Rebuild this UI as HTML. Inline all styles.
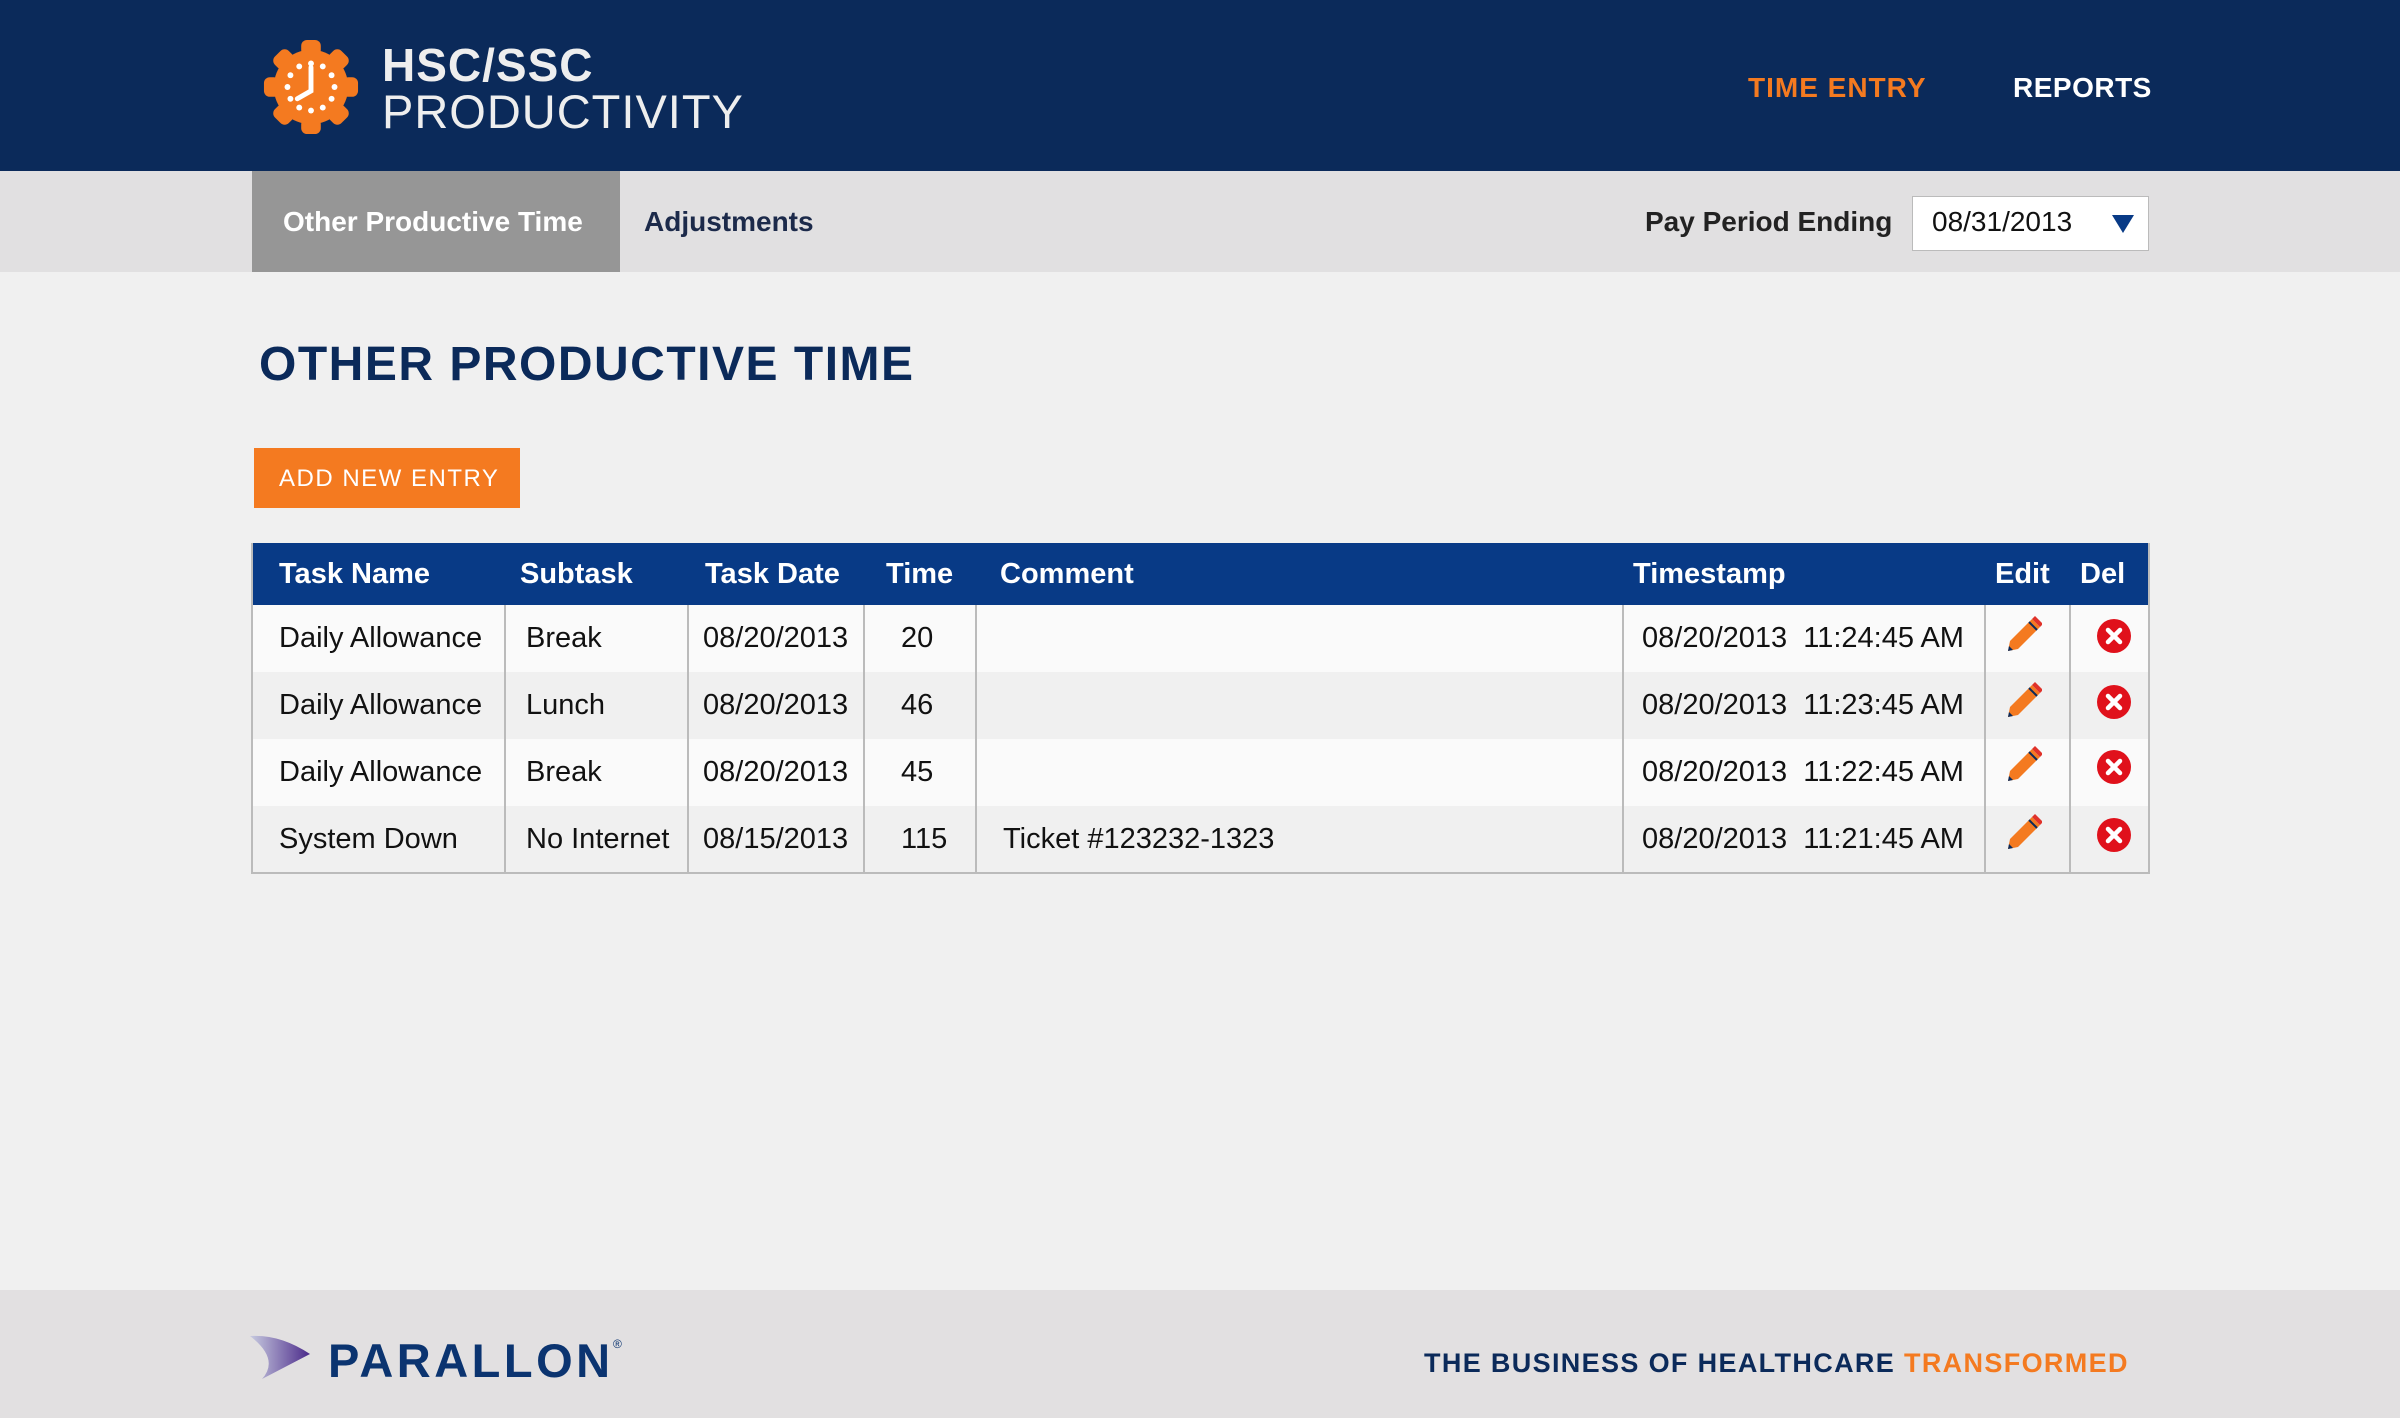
<!DOCTYPE html>
<html><head><meta charset="utf-8"><style>
*{margin:0;padding:0;box-sizing:border-box}
body{width:2400px;height:1418px;background:#f0f0f0;font-family:"Liberation Sans",Arial,sans-serif;position:relative;overflow:hidden}
.a{position:absolute;white-space:nowrap}
#hdr{position:absolute;left:0;top:0;width:2400px;height:171px;background:#0b2a5a}
#sub{position:absolute;left:0;top:171px;width:2400px;height:101px;background:#e1e0e1}
#ftr{position:absolute;left:0;top:1290px;width:2400px;height:128px;background:#e2e0e1}
table{position:absolute;left:251px;top:543px;width:1899px;border-collapse:collapse;font-size:29px}
th{background:#083a86;color:#fff;text-align:left;font-weight:bold;height:62px;padding:0 0 0 26px}
td{height:67px;border-left:2px solid #bbb;padding:0 0 0 26px;color:#111}
tr:nth-child(odd) td{background:#f0f0f0}
tr:nth-child(even) td{background:#fafafa}
table{border:2px solid #bbb;border-top:none}
</style></head><body>
<div id="hdr"></div>
<svg class="a" style="left:262px;top:38px" width="98" height="98" viewBox="-50 -50 100 100">
<g fill="#f47a20"><circle r="38"/>
<g id="t"><rect x="-10" y="-48" width="20" height="16" rx="6"/></g>
<use href="#t" transform="rotate(45)"/><use href="#t" transform="rotate(90)"/><use href="#t" transform="rotate(135)"/><use href="#t" transform="rotate(180)"/><use href="#t" transform="rotate(225)"/><use href="#t" transform="rotate(270)"/><use href="#t" transform="rotate(315)"/></g>
<g fill="#fff"><circle cx="0" cy="-24" r="3"/><circle cx="12" cy="-21" r="3"/><circle cx="21" cy="-12" r="3"/><circle cx="24" cy="0" r="3"/><circle cx="21" cy="12" r="3"/><circle cx="12" cy="21" r="3"/><circle cx="0" cy="24" r="3"/><circle cx="-12" cy="21" r="3"/><circle cx="-21" cy="12" r="3"/><circle cx="-24" cy="0" r="3"/><circle cx="-21" cy="-12" r="3"/><circle cx="-12" cy="-21" r="3"/></g>
<path d="M0 -20 V4 L-14 12" stroke="#fff" stroke-width="5" fill="none" stroke-linecap="round"/>
</svg>
<div class="a" style="left:382px;top:38px;color:#eee;font-size:46px;font-weight:bold;letter-spacing:1px">HSC/SSC</div>
<div class="a" style="left:382px;top:84px;color:#eee;font-size:47px;letter-spacing:1px">PRODUCTIVITY</div>
<div class="a" style="left:1748px;top:72px;color:#f47a20;font-size:28px;font-weight:bold;letter-spacing:1px">TIME ENTRY</div>
<div class="a" style="left:2013px;top:72px;color:#fff;font-size:28px;font-weight:bold;letter-spacing:0.5px">REPORTS</div>
<div id="sub"></div>
<div class="a" style="left:252px;top:171px;width:368px;height:101px;background:#969696"></div>
<div class="a" style="left:283px;top:206px;color:#fff;font-size:28px;font-weight:bold">Other Productive Time</div>
<div class="a" style="left:644px;top:206px;color:#1c2a4a;font-size:28px;font-weight:bold">Adjustments</div>
<div class="a" style="left:1645px;top:206px;color:#222;font-size:28px;font-weight:bold">Pay Period Ending</div>
<div class="a" style="left:1912px;top:196px;width:237px;height:55px;background:#fff;border:1px solid #bbb"></div>
<div class="a" style="left:1932px;top:206px;color:#111;font-size:28px">08/31/2013</div>
<svg class="a" style="left:2112px;top:215px" width="22" height="18"><path d="M0 0H22L11 18Z" fill="#083a86"/></svg>
<div class="a" style="left:259px;top:337px;color:#0b2a5a;font-size:48px;font-weight:bold;letter-spacing:1.5px">OTHER PRODUCTIVE TIME</div>
<div class="a" style="left:254px;top:448px;width:266px;height:60px;background:#f47a20"></div>
<div class="a" style="left:279px;top:465px;color:#fff;font-size:24px;letter-spacing:1.5px">ADD NEW ENTRY</div>
<table>
<tr><th style="width:253px">Task Name</th><th style="width:183px;padding-left:15px">Subtask</th><th style="width:176px;padding-left:17px">Task Date</th><th style="width:112px;padding-left:22px">Time</th><th style="width:647px;padding-left:24px">Comment</th><th style="width:362px;padding-left:10px">Timestamp</th><th style="width:85px;padding-left:10px">Edit</th><th style="padding-left:10px">Del</th></tr>
<tr><td>Daily Allowance</td><td style="padding-left:20px">Break</td><td style="padding-left:14px">08/20/2013</td><td style="padding-left:36px">20</td><td></td><td style="padding-left:18px">08/20/2013&nbsp; 11:24:45 AM</td><td class="e"></td><td class="d"></td></tr>
<tr><td>Daily Allowance</td><td style="padding-left:20px">Lunch</td><td style="padding-left:14px">08/20/2013</td><td style="padding-left:36px">46</td><td></td><td style="padding-left:18px">08/20/2013&nbsp; 11:23:45 AM</td><td class="e"></td><td class="d"></td></tr>
<tr><td>Daily Allowance</td><td style="padding-left:20px">Break</td><td style="padding-left:14px">08/20/2013</td><td style="padding-left:36px">45</td><td></td><td style="padding-left:18px">08/20/2013&nbsp; 11:22:45 AM</td><td class="e"></td><td class="d"></td></tr>
<tr><td>System Down</td><td style="padding-left:20px">No Internet</td><td style="padding-left:14px">08/15/2013</td><td style="padding-left:36px">115</td><td>Ticket #123232-1323</td><td style="padding-left:18px">08/20/2013&nbsp; 11:21:45 AM</td><td class="e"></td><td class="d"></td></tr>
</table>
<svg class="a" style="left:2002px;top:615px" width="40" height="240">
<g id="p"><path d="M6 36 L8 26 L30 4 L38 12 L16 34 Z" fill="#f47a20"/><path d="M27 7 L35 15" stroke="#0b2a5a" stroke-width="2"/><path d="M30 4 L33 1 L41 9 L38 12Z" fill="#e0322a"/><path d="M6 36 L7 31 L11 35Z" fill="#0b2a5a"/></g>
<use href="#p" y="66"/><use href="#p" y="130"/><use href="#p" y="198"/>
</svg>
<svg class="a" style="left:2096px;top:618px" width="38" height="240">
<g id="x"><circle cx="18" cy="18" r="17" fill="#e0111b"/><path d="M12 12L24 24M24 12L12 24" stroke="#fff" stroke-width="4.5" stroke-linecap="round"/></g>
<use href="#x" y="66"/><use href="#x" y="131"/><use href="#x" y="199"/>
</svg>
<div id="ftr"></div>
<svg class="a" style="left:250px;top:1334px" width="62" height="46"><defs><linearGradient id="g" x1="0" x2="1"><stop offset="0" stop-color="#c8cbe0"/><stop offset="1" stop-color="#4b2a8a"/></linearGradient></defs><path d="M0 2 Q30 0 60 20 L12 45 Q30 25 0 2Z" fill="url(#g)"/></svg>
<div class="a" style="left:328px;top:1333px;color:#0b3470;font-size:47px;font-weight:bold;letter-spacing:3.5px">PARALLON</div>
<div class="a" style="left:613px;top:1337px;color:#0b3470;font-size:12px">®</div>
<div class="a" style="left:1424px;top:1348px;color:#0b2a5a;font-size:27px;font-weight:bold;letter-spacing:1.35px">THE BUSINESS OF HEALTHCARE <span style="color:#f47a20">TRANSFORMED</span></div>
</body></html>
